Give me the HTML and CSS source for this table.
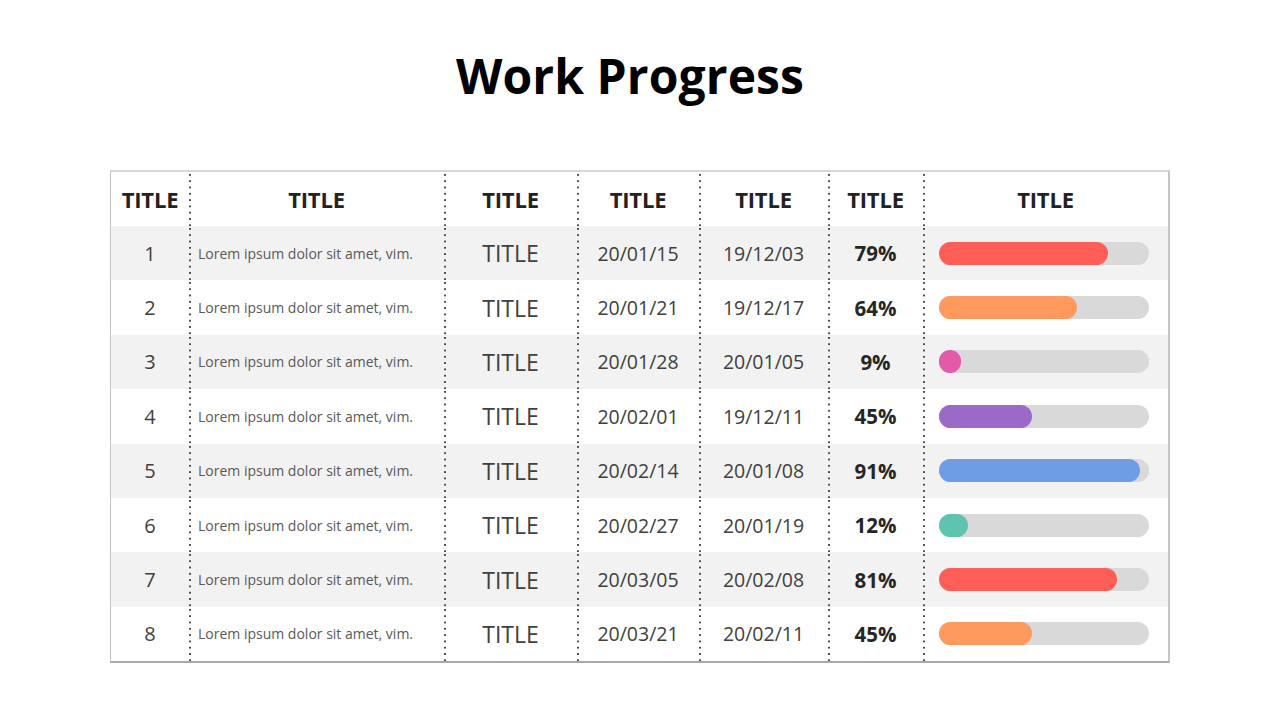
FILE: index.html
```html
<!DOCTYPE html>
<html lang="en">
<head>
<meta charset="utf-8">
<title>Work Progress</title>
<link rel="stylesheet" href="styles.css">
</head>
<body>
<main class="page">
  <h1 class="title">Work Progress</h1>
  <div class="table">
    <div class="row head">
      <div class="cell">TITLE</div>
      <div class="cell dot">TITLE</div>
      <div class="cell dot">TITLE</div>
      <div class="cell dot">TITLE</div>
      <div class="cell dot">TITLE</div>
      <div class="cell dot">TITLE</div>
      <div class="cell dot">TITLE</div>
    </div>
    <div class="row alt">
      <div class="cell num">1</div>
      <div class="cell dot desc">Lorem ipsum dolor sit amet, vim.</div>
      <div class="cell dot name">TITLE</div>
      <div class="cell dot date">20/01/15</div>
      <div class="cell dot date">19/12/03</div>
      <div class="cell dot pct">79%</div>
      <div class="cell dot barcell"><div class="track"><div class="fill red" style="width:80.5%"></div></div></div>
    </div>
    <div class="row">
      <div class="cell num">2</div>
      <div class="cell dot desc">Lorem ipsum dolor sit amet, vim.</div>
      <div class="cell dot name">TITLE</div>
      <div class="cell dot date">20/01/21</div>
      <div class="cell dot date">19/12/17</div>
      <div class="cell dot pct">64%</div>
      <div class="cell dot barcell"><div class="track"><div class="fill orange" style="width:65.5%"></div></div></div>
    </div>
    <div class="row alt">
      <div class="cell num">3</div>
      <div class="cell dot desc">Lorem ipsum dolor sit amet, vim.</div>
      <div class="cell dot name">TITLE</div>
      <div class="cell dot date">20/01/28</div>
      <div class="cell dot date">20/01/05</div>
      <div class="cell dot pct">9%</div>
      <div class="cell dot barcell"><div class="track"><div class="fill pink" style="width:10.5%"></div></div></div>
    </div>
    <div class="row">
      <div class="cell num">4</div>
      <div class="cell dot desc">Lorem ipsum dolor sit amet, vim.</div>
      <div class="cell dot name">TITLE</div>
      <div class="cell dot date">20/02/01</div>
      <div class="cell dot date">19/12/11</div>
      <div class="cell dot pct">45%</div>
      <div class="cell dot barcell"><div class="track"><div class="fill purple" style="width:44.5%"></div></div></div>
    </div>
    <div class="row alt">
      <div class="cell num">5</div>
      <div class="cell dot desc">Lorem ipsum dolor sit amet, vim.</div>
      <div class="cell dot name">TITLE</div>
      <div class="cell dot date">20/02/14</div>
      <div class="cell dot date">20/01/08</div>
      <div class="cell dot pct">91%</div>
      <div class="cell dot barcell"><div class="track"><div class="fill blue" style="width:95.7%"></div></div></div>
    </div>
    <div class="row">
      <div class="cell num">6</div>
      <div class="cell dot desc">Lorem ipsum dolor sit amet, vim.</div>
      <div class="cell dot name">TITLE</div>
      <div class="cell dot date">20/02/27</div>
      <div class="cell dot date">20/01/19</div>
      <div class="cell dot pct">12%</div>
      <div class="cell dot barcell"><div class="track"><div class="fill teal" style="width:14%"></div></div></div>
    </div>
    <div class="row alt">
      <div class="cell num">7</div>
      <div class="cell dot desc">Lorem ipsum dolor sit amet, vim.</div>
      <div class="cell dot name">TITLE</div>
      <div class="cell dot date">20/03/05</div>
      <div class="cell dot date">20/02/08</div>
      <div class="cell dot pct">81%</div>
      <div class="cell dot barcell"><div class="track"><div class="fill red" style="width:84.7%"></div></div></div>
    </div>
    <div class="row">
      <div class="cell num">8</div>
      <div class="cell dot desc">Lorem ipsum dolor sit amet, vim.</div>
      <div class="cell dot name">TITLE</div>
      <div class="cell dot date">20/03/21</div>
      <div class="cell dot date">20/02/11</div>
      <div class="cell dot pct">45%</div>
      <div class="cell dot barcell"><div class="track"><div class="fill orange" style="width:44.5%"></div></div></div>
    </div>
  </div>
</main>
</body>
</html>
```
FILE: styles.css
```css
html, body {
  margin: 0;
  padding: 0;
  background: #ffffff;
}

.page {
  width: 1280px;
  height: 720px;
  display: flex;
  flex-direction: column;
  align-items: center;
  font-family: "Open Sans", "Noto Sans", "DejaVu Sans", sans-serif;
  color: #404040;
}

.title {
  margin: 44px 0 0 0;
  padding-right: 20px;
  height: 64px;
  line-height: 64px;
  font-size: 48px;
  font-weight: 700;
  color: #000000;
  letter-spacing: 0.1px;
}

.table {
  margin-top: 62px;
  width: 1060px;
  box-sizing: border-box;
  border-top: 2px solid #d6d6d6;
  border-left: 1px solid #c4c4c4;
  border-right: 2px solid #c4c4c4;
  border-bottom: 2px solid #a8a8a8;
  display: flex;
  flex-direction: column;
}

.row {
  display: grid;
  grid-template-columns: 78px 255px 133px 122px 129px 95px 1fr;
  height: 54.4px;
  background: #ffffff;
}

.row.head {
  height: 54px;
}

.row.alt {
  background: #f2f2f2;
}

.cell {
  display: flex;
  align-items: center;
  justify-content: center;
  white-space: nowrap;
}

.dot {
  background-image: linear-gradient(to bottom, #4a4a4a 0, #4a4a4a 2px, transparent 2px);
  background-size: 2px 6.3px;
  background-repeat: repeat-y;
  background-position: 0 2px;
}

.head .cell {
  font-size: 22px;
  font-weight: 700;
  color: #222222;
  letter-spacing: -0.2px;
}

.num {
  font-size: 20px;
  color: #404040;
}

.desc {
  justify-content: flex-start;
  padding-left: 9px;
  font-size: 14px;
  color: #595959;
}

.name {
  font-size: 23px;
  color: #404040;
}

.date {
  font-size: 19.5px;
  color: #404040;
}

.pct {
  font-size: 20.5px;
  font-weight: 700;
  color: #262626;
}

.barcell {
  justify-content: flex-start;
  padding-left: 16px;
  padding-right: 19px;
}

.track {
  flex: 1;
  height: 23px;
  border-radius: 12px;
  background: #d9d9d9;
  display: flex;
}

.fill {
  height: 100%;
  border-radius: 12px;
}

.red { background: #ff5e57; }
.orange { background: #ff995e; }
.pink { background: #e25aa8; }
.purple { background: #9b69c8; }
.blue { background: #6e9de6; }
.teal { background: #5ec4ad; }
```
